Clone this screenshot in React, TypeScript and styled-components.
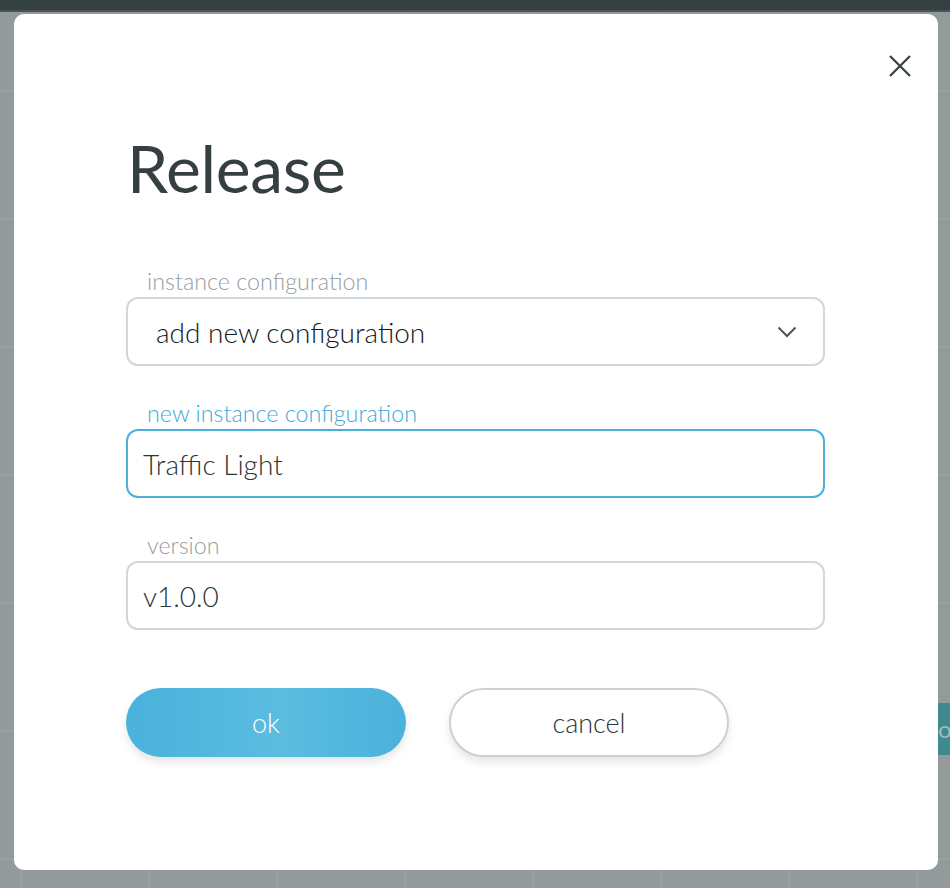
import React from "react";
import styled, { createGlobalStyle } from "styled-components";

const Global = createGlobalStyle`
  html, body { margin: 0; padding: 0; }
  body { font-family: Lato, "Open Sans", sans-serif; width: 950px; height: 888px; overflow: hidden; }
  * { box-sizing: border-box; }
`;

const Page = styled.div`
  position: relative;
  width: 950px;
  height: 888px;
  background-color: #939a9c;
  background-image:
    linear-gradient(to right, rgba(255,255,255,0.07) 2px, transparent 2px),
    linear-gradient(to bottom, rgba(255,255,255,0.07) 2px, transparent 2px);
  background-size: 128px 128px;
  background-position: 20px 90px;
  overflow: hidden;
`;

const TopBar = styled.div`
  height: 12px;
  background: #354043;
  border-bottom: 2px solid #4a5457;
`;

const SideTab = styled.div`
  position: absolute;
  left: 938px;
  top: 703px;
  width: 12px;
  height: 52px;
  background: #3e8a8d;
  color: #9fb8ba;
  font-size: 24px;
  line-height: 52px;
  overflow: hidden;
  white-space: nowrap;
`;

const Overlay = styled.div`
  position: absolute;
  inset: 14px 12px 18px 14px;
  display: flex;
`;

const Modal = styled.div`
  position: relative;
  flex: 1;
  background: #ffffff;
  border-radius: 10px;
  padding: 121px 113px 112px 112px;
  display: flex;
  flex-direction: column;
`;

const CloseButton = styled.button`
  position: absolute;
  top: 38px;
  right: 24px;
  width: 28px;
  height: 28px;
  padding: 0;
  border: none;
  background: transparent;
  display: flex;
  align-items: center;
  justify-content: center;
  cursor: pointer;
`;

const Title = styled.h1`
  margin: 0 0 68px 1px;
  font-family: Lato, sans-serif;
  font-weight: 400;
  font-size: 66px;
  line-height: 66px;
  color: #353f42;
  letter-spacing: -0.3px;
`;

const Fields = styled.div`
  display: flex;
  flex-direction: column;
  gap: 35px;
`;

const Field = styled.div`
  display: flex;
  flex-direction: column;
  gap: 4px;
`;

const Label = styled.label<{ $active?: boolean }>`
  padding-left: 21px;
  font-size: 23.3px;
  font-weight: 300;
  line-height: 24px;
  color: ${(p) => (p.$active ? "#3eabd6" : "#969ea1")};
`;

const Box = styled.div<{ $active?: boolean }>`
  height: 69px;
  border: 2px solid ${(p) => (p.$active ? "#4ab1da" : "#d2d7da")};
  border-radius: 12px;
  display: flex;
  align-items: center;
  padding: 0 15px;
  font-size: 28px;
  font-weight: 300;
  color: #2c3538;
`;

const SelectBox = styled(Box)`
  padding: 0 26px 0 28px;
  justify-content: space-between;
  color: #151a1c;
`;

const Buttons = styled.div`
  margin-top: 58px;
  display: flex;
  gap: 43px;
`;

const Button = styled.button<{ $primary?: boolean }>`
  width: 280px;
  height: 69px;
  border-radius: 35px;
  font-family: Lato, sans-serif;
  font-size: 27px;
  font-weight: 300;
  cursor: pointer;
  border: ${(p) => (p.$primary ? "none" : "2px solid #ccd1d6")};
  background: ${(p) =>
    p.$primary ? "linear-gradient(90deg, #4ab2db 0%, #5bbce0 55%, #4ab2db 100%)" : "#ffffff"};
  color: ${(p) => (p.$primary ? "#ffffff" : "#2c3538")};
  box-shadow: 0 5px 8px rgba(0, 0, 0, 0.1);
`;

export default function App() {
  return (
    <>
      <Global />
      <Page>
        <TopBar />
        <SideTab>o</SideTab>
        <Overlay>
          <Modal>
            <CloseButton aria-label="close">
              <svg width="24" height="24" viewBox="0 0 24 24">
                <path d="M2 2 L22 22 M22 2 L2 22" stroke="#354043" strokeWidth="2.2" fill="none" />
              </svg>
            </CloseButton>
            <Title>Release</Title>
            <Fields>
              <Field>
                <Label>instance configuration</Label>
                <SelectBox>
                  <span>add new configuration</span>
                  <svg width="20" height="12" viewBox="0 0 20 12">
                    <path d="M1.5 1.5 L10 10 L18.5 1.5" stroke="#4a5558" strokeWidth="2" fill="none" />
                  </svg>
                </SelectBox>
              </Field>
              <Field>
                <Label $active>new instance configuration</Label>
                <Box $active>Traffic Light</Box>
              </Field>
              <Field>
                <Label>version</Label>
                <Box>v1.0.0</Box>
              </Field>
            </Fields>
            <Buttons>
              <Button $primary>ok</Button>
              <Button>cancel</Button>
            </Buttons>
          </Modal>
        </Overlay>
      </Page>
    </>
  );
}
